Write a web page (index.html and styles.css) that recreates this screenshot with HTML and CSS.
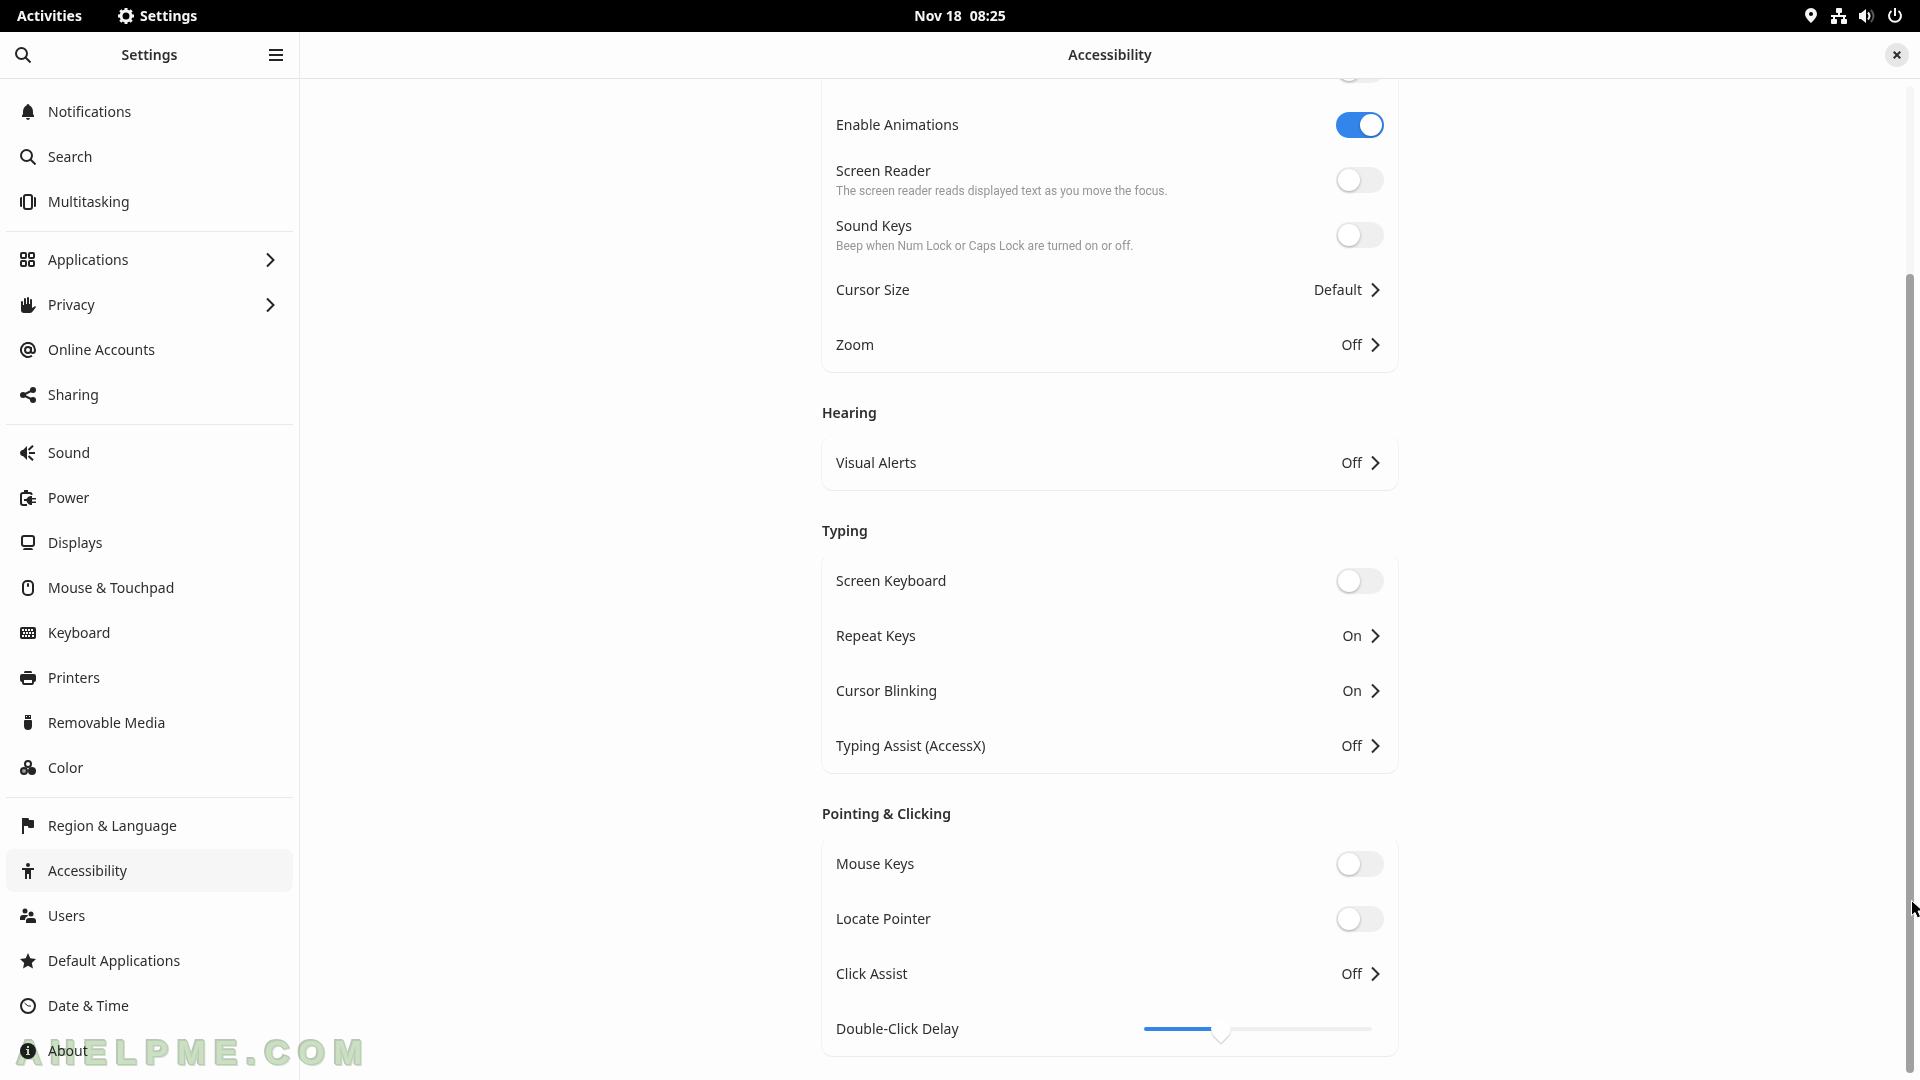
FILE: index.html
```html
<!DOCTYPE html>
<html lang="en">
  <head>
    <meta charset="utf-8">
    <title>Settings</title>
    <link rel="stylesheet" href="styles.css">
  </head>
  <body>
    <!-- shared icons -->
    <svg class="defs" aria-hidden="true">
      <symbol id="chevron" viewBox="0 0 16 16"><path d="M4 1.500 10.500 8 4 14.500" fill="none" stroke="currentColor" stroke-width="2"/></symbol>
      <symbol id="search" viewBox="0 0 16 16"><circle cx="6.5" cy="6.5" r="5.5" fill="none" stroke="currentColor" stroke-width="2"/><path d="m10.500 10.500 5 5" stroke="currentColor" stroke-width="2"/></symbol>
    </svg>

    <div class="topbar">
      <div class="topbar-side">
        <button class="top-btn">Activities</button>
        <button class="top-btn app-menu">
          <svg class="icon" viewBox="0 0 16 16"><circle cx="8" cy="8" r="5" fill="none" stroke="currentColor" stroke-width="3"/><path d="M8 0v3M8 13v3M0 8h3M13 8h3M2.300 2.300l2 2M11.700 11.700l2 2M2.300 13.700l2-2M11.700 4.300l2-2" stroke="currentColor" stroke-width="3"/></svg>
          Settings
        </button>
      </div>
      <button class="top-btn clock"><span>Nov 18</span><span>08:25</span></button>
      <div class="topbar-side status">
        <svg class="icon" viewBox="0 0 16 16"><path fill-rule="evenodd" d="M8 0a6 6 0 0 1 6 6c0 3.500-4 7-6 9-2-2-6-5.500-6-9a6 6 0 0 1 6-6zm0 4a2 2 0 1 0 0 4 2 2 0 0 0 0-4z"/></svg>
        <svg class="icon" viewBox="0 0 16 16"><path d="M5 1q0-1 1-1h4q1 0 1 1v3q0 1-1 1H9v2h6v2h-1v2h1q1 0 1 1v3q0 1-1 1h-4q-1 0-1-1v-3q0-1 1-1h1V9H4v2h1q1 0 1 1v3q0 1-1 1H1q-1 0-1-1v-3q0-1 1-1h1V9H0V7h7V5H6Q5 5 5 4z"/></svg>
        <svg class="icon" viewBox="0 0 16 16"><path d="M0 5h2l5-4v14l-5-4H0z"/><path d="M9 4.500q3 3.500 0 7" fill="none" stroke="currentColor" stroke-width="2"/><path d="M12 2q5 6 0 12" fill="none" stroke="#555" stroke-width="2"/></svg>
        <svg class="icon" viewBox="0 0 16 16"><path d="M4.500 3a6 6 0 1 0 7 0M8 0v8" fill="none" stroke="currentColor" stroke-width="2"/></svg>
      </div>
    </div>

    <div class="window">
      <aside class="sidebar">
        <header class="header sidebar-header">
          <button class="icon-btn" aria-label="Search"><svg class="icon"><use href="#search"/></svg></button>
          <h1 class="title">Settings</h1>
          <button class="icon-btn" aria-label="Menu"><svg class="icon" viewBox="0 0 16 16"><path d="M1 2h14v2H1zM1 7h14v2H1zM1 12h14v2H1z"/></svg></button>
        </header>
        <nav class="nav">
          <a class="nav-row" href="#"><svg class="icon" viewBox="0 0 16 16"><path d="M8 0q1.500 0 1.500 1.500Q13 3 13 8v2l1 1.500V13H2v-1.500L3 10V8q0-5 3.500-6.500Q6.500 0 8 0zM6 14h4q-.5 2-2 2t-2-2z"/></svg>Notifications</a>
          <a class="nav-row" href="#"><svg class="icon"><use href="#search"/></svg>Search</a>
          <a class="nav-row" href="#"><svg class="icon" viewBox="0 0 16 16"><rect x="4" y="1" width="8" height="14" rx="2" fill="none" stroke="currentColor" stroke-width="2"/><path d="M0 4q0-1 2-1v10q-2 0-2-1zM16 4q0-1-2-1v10q2 0 2-1z"/></svg>Multitasking</a>
          <hr class="sep">
          <a class="nav-row" href="#"><svg class="icon" viewBox="0 0 16 16"><g fill="none" stroke="currentColor" stroke-width="2"><rect x="1" y="1" width="5" height="5" rx="1"/><rect x="9" y="1" width="5" height="5" rx="1"/><rect x="1" y="9" width="5" height="5" rx="1"/><rect x="9" y="9" width="5" height="5" rx="1"/></g></svg>Applications<svg class="icon more"><use href="#chevron"/></svg></a>
          <a class="nav-row" href="#"><svg class="icon" viewBox="0 0 16 16"><path d="M1 5q0-1 1-1t1 1v3h1V2q0-1 1-1t1 1v5h1V1q0-1 1-1t1 1v6h1V3q0-1 1-1t1 1v8l2.500-1.500Q16 9 16 10l-3 4q-1 2-3 2H4q-3 0-3-3z"/></svg>Privacy<svg class="icon more"><use href="#chevron"/></svg></a>
          <a class="nav-row" href="#"><svg class="icon" viewBox="0 0 16 16"><g fill="none" stroke="currentColor" stroke-width="2"><circle cx="8" cy="8" r="3"/><path d="M11 5v4q0 2 2 2t2-3a7 7 0 1 0-3 5.700"/></g></svg>Online Accounts</a>
          <a class="nav-row" href="#"><svg class="icon" viewBox="0 0 16 16"><circle cx="3" cy="8" r="3"/><circle cx="13" cy="3" r="3"/><circle cx="13" cy="13" r="3"/><path d="M13 3 3 8l10 5" fill="none" stroke="currentColor" stroke-width="2"/></svg>Sharing</a>
          <hr class="sep">
          <a class="nav-row" href="#"><svg class="icon" viewBox="0 0 16 16"><path d="M7 1v14l-4-4H2q-2-1-2-3t2-3h1z"/><path d="M8.500 5 13 .7M9 8h6M8.500 11l4.500 4.300" stroke="currentColor" stroke-width="2"/></svg>Sound</a>
          <a class="nav-row" href="#"><svg class="icon" viewBox="0 0 16 16"><path d="M11.500 5V4q0-1-1.500-1H3Q1 3 1 5v8q0 2 2 2h4" fill="none" stroke="currentColor" stroke-width="2"/><path d="M4 0h4v2H4zM4 9h2.500Q8 6 11 6h1v2h4v1.500h-4v2h4V13h-4v2h-1q-3 0-4.500-4H4z"/></svg>Power</a>
          <a class="nav-row" href="#"><svg class="icon" viewBox="0 0 16 16"><rect x="2" y="1" width="12" height="10" rx="2" fill="none" stroke="currentColor" stroke-width="2"/><path d="M3 15q0-2 2-2h6q2 0 2 2z"/></svg>Displays</a>
          <a class="nav-row" href="#"><svg class="icon" viewBox="0 0 16 16"><rect x="3" y="1" width="10" height="14" rx="4" fill="none" stroke="currentColor" stroke-width="2"/><rect x="7" y="3" width="2" height="4" rx="1"/></svg>Mouse &amp; Touchpad</a>
          <a class="nav-row" href="#"><svg class="icon" viewBox="0 0 16 16"><rect y="2" width="16" height="12" rx="2"/><path d="M2 5h12M3 8h11M2 11h2M5 11h6M12 11h2" stroke="#fdfdfd" stroke-width="2" stroke-dasharray="2 1"/></svg>Keyboard</a>
          <a class="nav-row" href="#"><svg class="icon" viewBox="0 0 16 16"><path fill-rule="evenodd" d="M5 1h6q1 0 1 2H4q0-2 1-2zM2 4h12q2 0 2 2v4q0 2-2 2 0 3-2 3H4q-2 0-2-3-2 0-2-2V6q0-2 2-2zm2 6v3h8v-3z"/></svg>Printers</a>
          <a class="nav-row" href="#"><svg class="icon" viewBox="0 0 16 16"><path fill-rule="evenodd" d="M5 0h6v4H5zm1 1v1h1V1zm3 0v1h1V1zM4 6q0-1 1-1h6q1 0 1 1v5q0 4-4 4t-4-4z"/></svg>Removable Media</a>
          <a class="nav-row" href="#"><svg class="icon" viewBox="0 0 16 16"><circle cx="8" cy="4" r="3" fill="none" stroke="currentColor" stroke-width="2"/><circle cx="4" cy="11" r="3" fill="#999" stroke="currentColor" stroke-width="2"/><circle cx="12" cy="11" r="4"/></svg>Color</a>
          <hr class="sep">
          <a class="nav-row" href="#"><svg class="icon" viewBox="0 0 16 16"><path d="M2 0h6q1 0 1 2h4q1 0 1 1v6q0 1-1 1H9Q8 10 8 8H4v8H2z"/></svg>Region &amp; Language</a>
          <a class="nav-row active" href="#"><svg class="icon" viewBox="0 0 16 16"><circle cx="8" cy="2" r="2"/><path d="M2 5h12v2h-3v9H9v-5H7v5H5V7H2z"/></svg>Accessibility</a>
          <a class="nav-row" href="#"><svg class="icon" viewBox="0 0 16 16"><circle cx="5" cy="3" r="2.500"/><circle cx="11" cy="6" r="2.500"/><path d="M0 12v-2q0-3 3-3h4q1 0 1 1-3 1-3 4zM6 15v-2q0-3 3-3h4q3 0 3 3v2z"/></svg>Users</a>
          <a class="nav-row" href="#"><svg class="icon" viewBox="0 0 16 16"><path d="m8 0 2.300 5.300L16 6l-4.200 4 1.200 5.500L8 12.700 3 15.500 4.200 10 0 6l5.700-.7z"/></svg>Default Applications</a>
          <a class="nav-row" href="#"><svg class="icon" viewBox="0 0 16 16"><circle cx="8" cy="8" r="7" fill="none" stroke="currentColor" stroke-width="2"/><path d="m4.500 5 3.500 3h3" fill="none" stroke="currentColor"/></svg>Date &amp; Time</a>
          <a class="nav-row" href="#"><svg class="icon" viewBox="0 0 16 16"><circle cx="8" cy="8" r="8"/><path d="M7 3h2v2H7zM6 6h3v5h1v1H6v-1h1V7H6z" fill="#fdfdfd"/></svg>About</a>
        </nav>
      </aside>

      <main class="panel">
        <header class="header">
          <h2 class="title">Accessibility</h2>
          <button class="close" aria-label="Close"><svg viewBox="0 0 8 8"><path d="m.7.7 6.600 6.600M7.300.7.7 7.300" stroke="currentColor" stroke-width="2"/></svg></button>
        </header>

        <div class="scroller">
          <div class="content">
            <section class="card">
              <div class="row"><input type="checkbox" class="switch" aria-label="Large Text"></div>
              <label class="row">Enable Animations<input type="checkbox" class="switch" checked></label>
              <label class="row"><span class="row-text">Screen Reader<small class="hint">The screen reader reads displayed text as you move the focus.</small></span><input type="checkbox" class="switch"></label>
              <label class="row"><span class="row-text">Sound Keys<small class="hint">Beep when Num Lock or Caps Lock are turned on or off.</small></span><input type="checkbox" class="switch"></label>
              <button class="row">Cursor Size<span class="value">Default<svg class="icon"><use href="#chevron"/></svg></span></button>
              <button class="row">Zoom<span class="value">Off<svg class="icon"><use href="#chevron"/></svg></span></button>
            </section>

            <h3 class="group">Hearing</h3>
            <section class="card">
              <button class="row">Visual Alerts<span class="value">Off<svg class="icon"><use href="#chevron"/></svg></span></button>
            </section>

            <h3 class="group">Typing</h3>
            <section class="card">
              <label class="row">Screen Keyboard<input type="checkbox" class="switch"></label>
              <button class="row">Repeat Keys<span class="value">On<svg class="icon"><use href="#chevron"/></svg></span></button>
              <button class="row">Cursor Blinking<span class="value">On<svg class="icon"><use href="#chevron"/></svg></span></button>
              <button class="row">Typing Assist (AccessX)<span class="value">Off<svg class="icon"><use href="#chevron"/></svg></span></button>
            </section>

            <h3 class="group">Pointing &amp; Clicking</h3>
            <section class="card">
              <label class="row">Mouse Keys<input type="checkbox" class="switch"></label>
              <label class="row">Locate Pointer<input type="checkbox" class="switch"></label>
              <button class="row">Click Assist<span class="value">Off<svg class="icon"><use href="#chevron"/></svg></span></button>
              <label class="row">Double-Click Delay<input type="range" class="slider" min="0" max="100" value="32"></label>
            </section>
          </div>
          <div class="scrollbar"><div class="scroll-thumb"></div></div>
        </div>
      </main>
    </div>

    <div class="watermark">AHELPME.COM</div>
    <svg class="pointer" viewBox="0 0 12 19"><path d="M.5.500v15l3.500-3 2.500 5.500 3-1.500L7 11h5z" fill="#000" stroke="#fff"/></svg>
  </body>
</html>
```

FILE: styles.css
```css
* {
  box-sizing: border-box;
}
body {
  margin: 0;
  height: 100vh;
  display: flex;
  flex-direction: column;
  overflow: hidden;
  position: relative;
  background: #fdfdfd;
  color: #2e2e2e;
  font: 14px/20px "Noto Sans", "Open Sans", sans-serif;
}
button {
  font: inherit;
  color: inherit;
  background: none;
  border: 0;
  padding: 0;
}
.defs {
  position: absolute;
  width: 0;
  height: 0;
}
.icon {
  width: 16px;
  height: 16px;
  flex: none;
  fill: currentColor;
}

/* top bar */
.topbar {
  height: 32px;
  flex: none;
  display: flex;
  align-items: center;
  padding: 0 17px;
  background: #000;
  color: #f6f6f6;
  font-weight: 700;
}
.topbar-side {
  flex: 1;
  display: flex;
  align-items: center;
  gap: 36px;
}
.app-menu {
  display: flex;
  align-items: center;
  gap: 6px;
}
.clock {
  display: flex;
  gap: 8px;
}
.status {
  justify-content: flex-end;
  gap: 12px;
}

.window {
  flex: 1;
  min-height: 0;
  display: flex;
}
.header {
  height: 47px;
  flex: none;
  display: flex;
  align-items: center;
  justify-content: center;
  position: relative;
  border-bottom: 1px solid #e4e4e4;
}
.title {
  margin: 0;
  font-size: 14px;
  font-weight: 600;
}

/* sidebar */
.sidebar {
  width: 300px;
  flex: none;
  border-right: 1px solid #ebebeb;
}
.sidebar-header {
  justify-content: space-between;
  padding: 0 15px;
}
.icon-btn {
  display: flex;
  color: #242424;
}
.nav {
  display: flex;
  flex-direction: column;
  gap: 2px;
  padding: 11px 6px;
}
.nav-row {
  height: 43px;
  display: flex;
  align-items: center;
  gap: 12px;
  padding: 0 14px;
  border-radius: 8px;
  color: inherit;
  text-decoration: none;
}
.nav-row .icon {
  color: #242424;
}
.nav-row .more {
  margin-left: auto;
}
.active {
  background: #f6f6f6;
}
.sep {
  width: 100%;
  height: 1px;
  margin: 6px 0 4px;
  border: 0;
  background: #e9e9e9;
}

/* panel */
.panel {
  flex: 1;
  min-width: 0;
  display: flex;
  flex-direction: column;
}
.close {
  position: absolute;
  right: 11px;
  width: 24px;
  height: 24px;
  display: flex;
  align-items: center;
  justify-content: center;
  border-radius: 50%;
  background: #e7e7e7;
}
.close svg {
  width: 8px;
  height: 8px;
}
.scroller {
  flex: 1;
  min-height: 0;
  position: relative;
  overflow: hidden;
  display: flex;
  flex-direction: column;
  justify-content: flex-end;
  padding-bottom: 23px;
}
.content {
  width: 100%;
  max-width: 578px;
  margin: 0 auto;
}
.group {
  margin: 0;
  padding: 28px 1px 10px;
  font-size: 14px;
  line-height: 24px;
  font-weight: 600;
}
.card {
  border: 1px solid #f3f3f3;
  border-top-color: #fbfbfb;
  border-bottom-color: #ececec;
  border-radius: 12px;
}
.row {
  width: 100%;
  height: 54px;
  display: flex;
  align-items: center;
  justify-content: space-between;
  padding: 0 14px;
}
.row + .row {
  margin-top: 1px;
}
.row-text {
  padding-top: 2px;
}
.hint {
  display: block;
  font-family: Roboto, sans-serif;
  font-size: 12px;
  color: #969696;
}
.value {
  display: flex;
  align-items: center;
  gap: 6px;
}
.switch {
  appearance: none;
  width: 48px;
  height: 26px;
  margin: 0 0 0 auto;
  padding: 2px;
  display: flex;
  border-radius: 13px;
  background: #efefef;
}
.switch::before {
  content: "";
  width: 22px;
  height: 22px;
  border-radius: 50%;
  background: #fff;
  box-shadow: 0 1px 3px rgba(0, 0, 0, .3);
}
.switch:checked {
  justify-content: flex-end;
  background: #3385ec;
}
.slider {
  appearance: none;
  width: 228px;
  height: 20px;
  margin: 0 12px;
  background: none;
}
.slider::-webkit-slider-runnable-track {
  height: 4px;
  border-radius: 2px;
  background: linear-gradient(to right, #3385ec 33%, #efefef 33%);
}
.slider::-webkit-slider-thumb {
  appearance: none;
  width: 20px;
  height: 20px;
  margin-top: -8px;
  border-radius: 50% 50% 0 50%;
  transform: rotate(45deg);
  background: #fefefe;
  box-shadow: 1px 1px 1px rgba(0, 0, 0, .2);
}
.scrollbar {
  position: absolute;
  top: 7px;
  right: 6px;
  bottom: 7px;
  width: 8px;
  display: flex;
  align-items: flex-end;
  border-radius: 4px;
  background: #f6f6f6;
}
.scroll-thumb {
  width: 100%;
  height: 81%;
  border-radius: 4px;
  background: #a0a0a0;
}

/* overlays */
.watermark {
  position: absolute;
  left: 17px;
  bottom: 8px;
  font: bold 34px/40px "Liberation Sans", sans-serif;
  letter-spacing: 9px;
  color: #cde2c4;
  -webkit-text-stroke: 2px #bccdb6;
  paint-order: stroke;
  filter: drop-shadow(1px 1px #d2e0ce) drop-shadow(-1px -1px #bcc6ba);
  mix-blend-mode: multiply;
  pointer-events: none;
}
.pointer {
  position: absolute;
  left: 1911px;
  top: 900px;
  width: 12px;
  height: 19px;
}
```
